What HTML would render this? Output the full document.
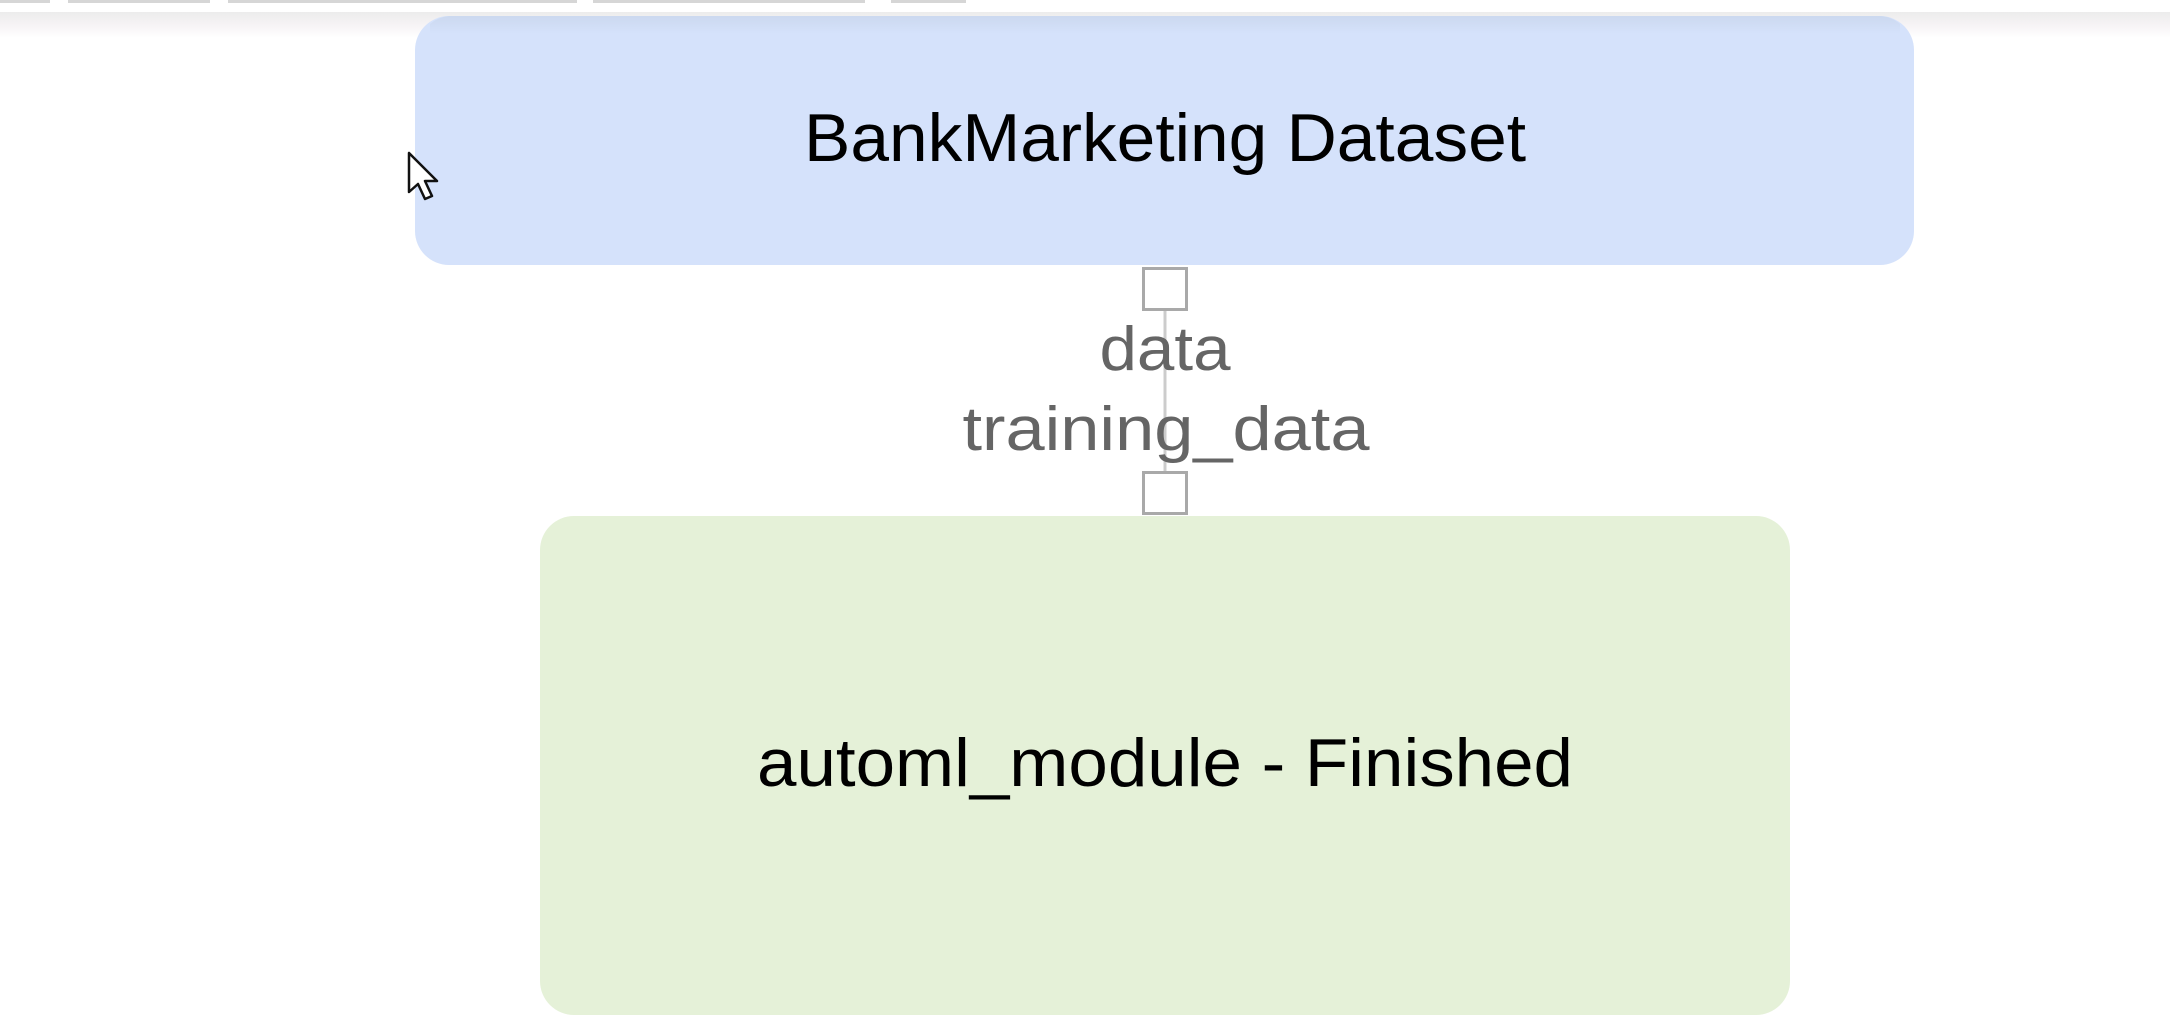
<!DOCTYPE html>
<html><head><meta charset="utf-8"><style>
html,body{margin:0;padding:0;background:#fff;width:2170px;height:1025px;overflow:hidden;}
</style></head><body>
<svg width="2170" height="1025" viewBox="0 0 2170 1025" xmlns="http://www.w3.org/2000/svg" style="display:block">
<defs>
<linearGradient id="bar" x1="0" y1="0" x2="0" y2="1">
<stop offset="0" stop-color="#ececec"/><stop offset="0.5" stop-color="#f6f3f5"/><stop offset="1" stop-color="#ffffff"/>
</linearGradient>
<linearGradient id="bt" x1="0" y1="0" x2="0" y2="1">
<stop offset="0" stop-color="#c9d6ec"/><stop offset="1" stop-color="#d5e2fb"/>
</linearGradient>
</defs>
<rect x="0" y="12" width="2170" height="26" fill="url(#bar)"/>
<g fill="#d6d6d6">
<rect x="0" y="0" width="50" height="3"/><rect x="68" y="0" width="142" height="3"/><rect x="228" y="0" width="349" height="3"/>
<rect x="593" y="0" width="272" height="3"/><rect x="891" y="0" width="75" height="3"/>
</g>
<rect x="415" y="16" width="1499" height="249" rx="34" fill="#d5e2fb"/>
<path d="M449 16 H1880 A34 34 0 0 1 1900 24 V34 H430 V24 A34 34 0 0 1 449 16Z" fill="url(#bt)" opacity="0.8"/>
<text x="1165" y="161" text-anchor="middle" font-family="Liberation Sans, sans-serif" font-size="68" fill="#000" textLength="722" lengthAdjust="spacingAndGlyphs">BankMarketing Dataset</text>
<rect x="540" y="516" width="1250" height="499" rx="34" fill="#e5f1d8"/>
<text x="1165" y="786" text-anchor="middle" font-family="Liberation Sans, sans-serif" font-size="68" fill="#000" textLength="816" lengthAdjust="spacingAndGlyphs">automl_module - Finished</text>
<line x1="1165" y1="310" x2="1165" y2="471" stroke="#cccccc" stroke-width="3"/>
<rect x="1143.5" y="268.5" width="43" height="41" fill="#fff" stroke="#a9a9a9" stroke-width="3"/>
<rect x="1143.5" y="472.5" width="43" height="41" fill="#fff" stroke="#a9a9a9" stroke-width="3"/>
<text x="1165" y="370" text-anchor="middle" font-family="Liberation Sans, sans-serif" font-size="62" fill="#656565" textLength="131" lengthAdjust="spacingAndGlyphs">data</text>
<text x="1166" y="450" text-anchor="middle" font-family="Liberation Sans, sans-serif" font-size="62" fill="#656565" textLength="407" lengthAdjust="spacingAndGlyphs">training_data</text>
<path d="M409 153 L409 192 L418 184 L425 199 L432 196 L425 181 L437 181 Z" fill="#fff" stroke="#111" stroke-width="2.5" stroke-linejoin="round"/>
</svg>
</body></html>
